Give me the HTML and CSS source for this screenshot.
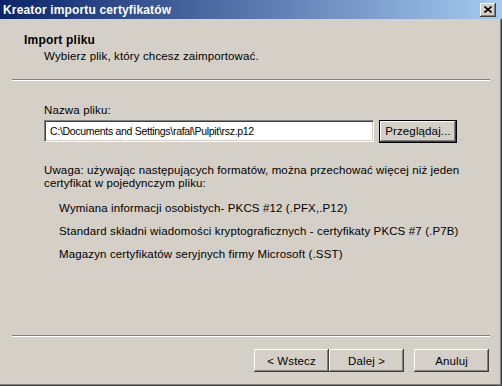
FILE: index.html
```html
<!DOCTYPE html>
<html lang="pl">
<head>
  <meta charset="utf-8">
  <title>Kreator importu certyfikatów</title>
  <link rel="stylesheet" href="styles.css">
</head>
<body>
  <div class="window">
    <div class="titlebar">
      <span class="titlebar__text">Kreator importu certyfikatów</span>
      <span class="titlebar__close">
        <svg width="8" height="7" viewBox="0 0 8 7">
          <path d="M0.5 0.5 L7.5 6.5 M7.5 0.5 L0.5 6.5" stroke="#000" stroke-width="1.6" fill="none"/>
        </svg>
      </span>
    </div>
    <div class="header">
      <div class="header__title">Import pliku</div>
      <div class="header__subtitle">Wybierz plik, który chcesz zaimportować.</div>
    </div>
    <div class="separator"></div>
    <div class="content">
      <div class="field__label">Nazwa pliku:</div>
      <div class="field__row">
        <div class="textbox">C:\Documents and Settings\rafal\Pulpit\rsz.p12</div>
        <div class="button button--default">Przeglądaj...</div>
      </div>
      <div class="note">Uwaga: używając następujących formatów, można przechować więcej niż jeden<br>certyfikat w pojedynczym pliku:</div>
      <div class="formats">
        <div class="format">Wymiana informacji osobistych- PKCS #12 (.PFX,.P12)</div>
        <div class="format">Standard składni wiadomości kryptograficznych - certyfikaty PKCS #7 (.P7B)</div>
        <div class="format">Magazyn certyfikatów seryjnych firmy Microsoft (.SST)</div>
      </div>
    </div>
    <div class="separator"></div>
    <div class="footer">
      <div class="button">&lt; Wstecz</div>
      <div class="button">Dalej &gt;</div>
      <div class="button button--cancel">Anuluj</div>
    </div>
  </div>
</body>
</html>
```

FILE: styles.css
```css
* {
  box-sizing: border-box;
}

body {
  margin: 0;
  background-color: #D4D0C8;
  font-family: "Liberation Sans", Arial, sans-serif;
  font-size: 11.5px;
  letter-spacing: 0.13px;
  color: #000;
}

.window {
  width: 502px;
  height: 386px;
  display: flex;
  flex-direction: column;
  background-color: #D4D0C8;
  box-shadow: inset -1px -1px #404040, inset -2px -2px #808080;
}

.titlebar {
  height: 19px;
  flex: none;
  display: flex;
  align-items: center;
  justify-content: space-between;
  padding: 0 6px 0 3px;
  background: linear-gradient(to right, #0A246A, #A6CAF0);
  color: #fff;
  font-size: 12px;
  font-weight: bold;
  letter-spacing: 0.15px;
}

.titlebar__close {
  width: 16px;
  height: 14px;
  display: flex;
  align-items: center;
  justify-content: center;
  background-color: #D4D0C8;
  box-shadow: inset -1px -1px #404040, inset 1px 1px #fff, inset -2px -2px #808080;
}

.header {
  height: 60px;
  flex: none;
  padding: 15px 0 0 24px;
  line-height: 13px;
}

.header__title {
  font-size: 12px;
  font-weight: bold;
  letter-spacing: 0.2px;
}

.header__subtitle {
  margin-top: 3px;
  padding-left: 20px;
}

.separator {
  height: 2px;
  flex: none;
  margin: 0 12px;
  border-top: 1px solid #808080;
  border-bottom: 1px solid #fff;
}

.content {
  flex: 1;
  padding: 23px 0 0 44px;
  line-height: 13px;
}

.field__row {
  display: flex;
  align-items: flex-start;
  gap: 5px;
  margin-top: 3px;
}

.textbox {
  width: 330px;
  height: 22px;
  padding: 4px 0 0 5px;
  background-color: #fff;
  border-top: 1px solid #808080;
  border-left: 1px solid #808080;
  border-bottom: 1px solid #fff;
  border-right: 1px solid #fff;
  box-shadow: inset 1px 1px #404040, inset -1px -1px #D4D0C8;
  font-size: 10.5px;
  letter-spacing: -0.3px;
  white-space: nowrap;
}

.button {
  width: 75px;
  height: 23px;
  display: flex;
  align-items: center;
  justify-content: center;
  background-color: #D4D0C8;
  box-shadow: inset -1px -1px #404040, inset 1px 1px #fff, inset -2px -2px #808080;
}

.button--default {
  width: 78px;
  border: 1px solid #000;
}

.button--cancel {
  margin-left: 10px;
}

.note {
  margin-top: 21px;
}

.formats {
  margin-top: 12px;
  padding-left: 15px;
}

.format {
  margin-bottom: 10px;
}

.footer {
  height: 49px;
  flex: none;
  display: flex;
  justify-content: flex-end;
  padding: 12px 13px 0 0;
}
```
